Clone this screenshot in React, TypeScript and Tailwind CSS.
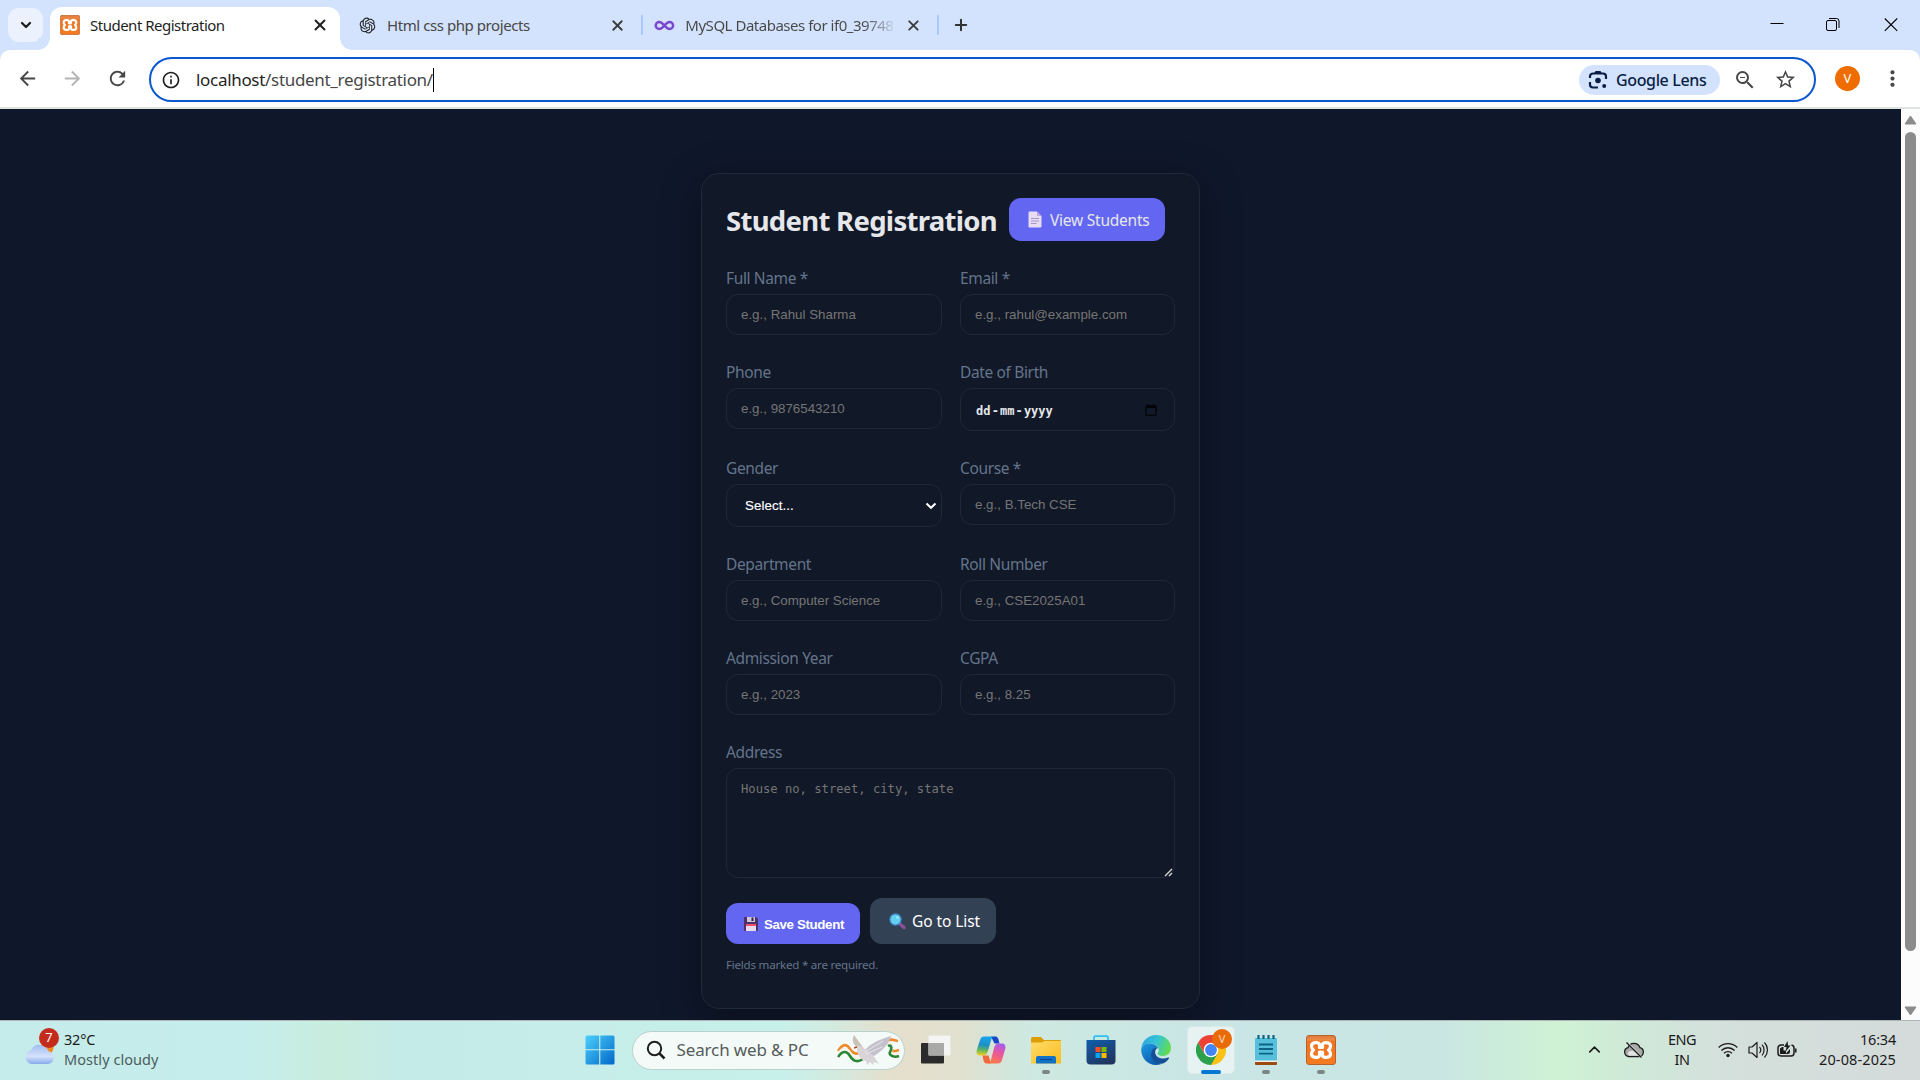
import React from "react";
import {
  MdArrowBack,
  MdArrowForward,
  MdRefresh,
  MdOutlineInfo,
  MdStarBorder,
  MdMoreVert,
  MdZoomOut,
} from "react-icons/md";
import { RiOpenaiFill } from "react-icons/ri";
import { Infinity as InfinityIcon, ChevronDown, ChevronUp, Plus, X } from "lucide-react";

function XamppIcon({ className }: { className: string }) {
  return (
    <svg viewBox="0 0 30 30" className={className}>
      <defs>
        <linearGradient id="xampp" x1="0" y1="0" x2="0" y2="1">
          <stop offset="0" stopColor="#d9793a" />
          <stop offset=".15" stopColor="#f08a45" />
          <stop offset=".2" stopColor="#ee7424" />
          <stop offset="1" stopColor="#f47b20" />
        </linearGradient>
      </defs>
      <rect x=".5" y=".5" width="29" height="29" rx="2.5" fill="url(#xampp)" stroke="#b9622c" />
      <path
        d="M13.500 12.500V9.500C13.500 6.800 5.500 6.800 5.500 11c0 2 .8 3.200 2 4-1.200.8-2 2-2 4 0 4.200 8 4.200 8 1.500v-3.500h3v3.500c0 2.700 8 2.700 8-1.500 0-2-.8-3.200-2-4 1.200-.8 2-2 2-4 0-4.200-8-4.200-8-1.500v3z"
        fill="none"
        stroke="#fff"
        strokeWidth="3.200"
        strokeLinejoin="round"
      />
    </svg>
  );
}

function LensIcon() {
  return (
    <svg viewBox="0 0 20 20" className="h-5 w-5" fill="none" stroke="#0a1d45" strokeWidth="2.200">
      <path d="M2 8V6.500A3 3 0 0 1 5 3.500h10a3 3 0 0 1 3 3V9M2 12v2.500a3 3 0 0 0 3 3h5" />
      <path d="M7 3.200 8 1.600h4l1 1.600" fill="#0a1d45" strokeWidth="1.400" />
      <circle cx="10" cy="10.500" r="2.800" fill="#0a1d45" stroke="none" />
      <circle cx="16.200" cy="16" r="2" fill="#0a1d45" stroke="none" />
    </svg>
  );
}

function TabStrip() {
  return (
    <div className="flex h-[50px] bg-[#d3e3fd] pl-2">
      <div className="mt-2 flex h-[34px] w-[35px] items-center justify-center rounded-[11px] bg-[#ebf1fd]">
        <ChevronDown className="h-4 w-4 text-[#1f1f1f]" strokeWidth={3.4} />
      </div>
      <div className="relative ml-[7px] mt-[7px] flex h-[43px] w-[290px] items-center rounded-t-[12px] bg-white pb-[7px] pl-[10px]">
        <div className="absolute -left-3 bottom-0 h-3 w-3 bg-[radial-gradient(circle_at_0_0,#d3e3fd_11.500px,#fff_12px)]" />
        <div className="absolute -right-3 bottom-0 h-3 w-3 bg-[radial-gradient(circle_at_100%_0,#d3e3fd_11.500px,#fff_12px)]" />
        <XamppIcon className="h-5 w-5" />
        <span className="ml-[10px] flex-1 text-[15px] tracking-[-0.500px] text-[#1f1f1f]">Student Registration</span>
        <X className="mr-[11px] h-[18px] w-[18px] text-[#1f1f1f]" strokeWidth={2.600} />
      </div>
      <div className="mt-[7px] flex h-9 w-[301px] items-center pl-[18px]">
        <RiOpenaiFill className="h-[19px] w-[19px] text-[#1f1f1f]" />
        <span className="ml-[10px] flex-1 text-[15px] tracking-[-0.430px] text-[#474747]">Html css php projects</span>
        <X className="mr-[15px] h-[17px] w-[17px] text-[#3a3a3a]" strokeWidth={2.600} />
      </div>
      <div className="mt-[7px] flex h-9 w-[298px] items-center">
        <div className="h-5 w-[2.500px] rounded-full bg-[#a8c7fa]" />
        <InfinityIcon className="ml-[11px] h-[21px] w-[21px] text-[#7a48cf]" strokeWidth={2.900} />
        <span className="ml-[10px] w-[216px] overflow-hidden whitespace-nowrap bg-[linear-gradient(90deg,#474747_83%,#47474700_99%)] bg-clip-text text-[15px] tracking-[-0.480px] text-transparent">
          MySQL Databases for if0_39748
        </span>
        <X className="ml-[5px] h-[17px] w-[17px] text-[#3a3a3a]" strokeWidth={2.600} />
        <div className="ml-[15px] h-5 w-[2.500px] rounded-full bg-[#a8c7fa]" />
      </div>
      <Plus className="ml-[13px] mt-[16px] h-[18px] w-[18px] text-[#333]" strokeWidth={2.700} />
      <div className="flex flex-1 items-start justify-end pr-[22px] pt-[18px] text-black">
        <svg viewBox="0 0 14 14" className="h-[14px] w-[14px]">
          <path d="M.5 5.500h13" stroke="currentColor" />
        </svg>
        <svg viewBox="0 0 14 14" className="ml-[42px] h-[14px] w-[14px]" fill="none" stroke="currentColor">
          <rect x=".5" y="2.500" width="10" height="10" rx="1.500" />
          <path d="M3 .500h7.500a2.500 2.500 0 0 1 2.500 2.500V10" />
        </svg>
        <svg viewBox="0 0 14 14" className="ml-11 h-[14px] w-[14px]">
          <path d="m.8.5 12.400 12.400M13.200.5.8 12.900" stroke="currentColor" strokeWidth="1.100" />
        </svg>
      </div>
    </div>
  );
}

function Toolbar() {
  return (
    <div className="h-[59px] bg-[#d3e3fd]">
      <div className="flex h-full items-center rounded-t-[10px] border-b-2 border-[#dfe4e0] bg-white pl-[16px]">
        <MdArrowBack className="h-[23px] w-[23px] text-[#474747]" />
        <MdArrowForward className="ml-[22px] h-[23px] w-[23px] text-[#b4b4b4]" />
        <MdRefresh className="ml-[22px] h-[23px] w-[23px] text-[#474747]" />
        <div className="ml-[20px] mt-[2px] flex h-[45px] w-[1667px] items-center rounded-full border-[2.500px] border-[#0b57d0] pl-[10px]">
          <MdOutlineInfo className="h-[20px] w-[20px] text-[#1f1f1f]" />
          <div className="ml-[15px] flex items-center text-[17px] tracking-[-0.310px]">
            <span className="text-[#1f1f1f]">localhost</span>
            <span className="text-[#474747]">/student_registration/</span>
            <span className="h-6 w-px bg-black" />
          </div>
          <div className="ml-auto flex h-[30px] w-[141px] items-center rounded-full bg-[#d3e3fd] pl-[9px]">
            <LensIcon />
            <span className="ml-[8px] whitespace-nowrap text-[16px] font-medium tracking-[-0.360px] text-[#0a1d45]">Google Lens</span>
          </div>
          <MdZoomOut className="ml-[13px] h-6 w-6 text-[#474747]" />
          <MdStarBorder className="ml-[17px] h-[23px] w-[23px] text-[#474747]" />
          <div className="w-[17px]" />
        </div>
        <div className="ml-[19px] flex h-[25px] w-[25px] items-center justify-center rounded-full bg-[#ef6c00] text-[13px] text-white">V</div>
        <MdMoreVert className="ml-[20px] h-[25px] w-[25px] text-[#474747]" />
      </div>
    </div>
  );
}

function Label({ children }: { children: React.ReactNode }) {
  return <div className="h-5 whitespace-nowrap text-[15.500px] leading-5 tracking-[-0.360px] text-[#64748b]">{children}</div>;
}

const box = "mt-[6px] flex items-center rounded-xl border border-[#1f2937] font-['Liberation_Sans',sans-serif] text-[13.330px]";

function Field({ label, placeholder }: { label: string; placeholder: string }) {
  return (
    <div>
      <Label>{label}</Label>
      <div className={`${box} h-[41px] pl-[14px] text-[#757575]`}>{placeholder}</div>
    </div>
  );
}

function PageIcon() {
  return (
    <svg viewBox="0 0 14 17" className="h-[17px] w-[14px]">
      <path d="M1.500.5h7.500L13.500 5v10.500a1 1 0 0 1-1 1h-11a1 1 0 0 1-1-1v-14a1 1 0 0 1 1-1z" fill="#e6dcf4" />
      <path d="M9 .5 13.500 5H9z" fill="#b9a6dc" />
      <path d="M3 7.500h8M3 10h8M3 12.500h5.500" stroke="#a796c4" />
    </svg>
  );
}

function FloppyIcon() {
  return (
    <svg viewBox="0 0 14 14" className="h-[14px] w-[14px]">
      <path d="M1 0h11l2 2v11a1 1 0 0 1-1 1H1a1 1 0 0 1-1-1V1a1 1 0 0 1 1-1z" fill="#4d3168" />
      <path d="M3 0h8v5H3z" fill="#cfc6dc" />
      <path d="M7.500.5h2v3.500h-2z" fill="#35214d" />
      <path d="M2 7h10v7H2z" fill="#e7dcef" />
      <path d="M2 7h10v2H2z" fill="#f0506e" />
    </svg>
  );
}

function MagnifierIcon() {
  return (
    <svg viewBox="0 0 17 17" className="h-[17px] w-[17px]">
      <path d="m10.500 10.500 4.500 4" stroke="#8b4f93" strokeWidth="3.400" strokeLinecap="round" />
      <circle cx="6.500" cy="6.500" r="5.600" fill="#62d0ee" stroke="#3f86c9" strokeWidth="1.200" />
      <circle cx="8.500" cy="4.500" r="1.200" fill="#a8e9f8" />
    </svg>
  );
}

function RegistrationCard() {
  return (
    <div className="mt-16 h-[836px] w-[499px] rounded-[18px] border border-[#1f2937] bg-[#111827] px-6 pt-6 shadow-[0_10px_40px_rgba(0,0,0,0.350)]">
      <div className="flex h-[43px] items-center">
        <h1 className="w-[283px] whitespace-nowrap pt-[3px] text-[27.500px] font-bold leading-[42px] tracking-[-0.700px] text-[#e5e7eb]">Student Registration</h1>
        <div className="flex h-[43px] w-[156px] items-center rounded-xl bg-[#6366f1] pl-[19px] text-[#e5e7eb]">
          <PageIcon />
          <span className="ml-[8px] whitespace-nowrap pt-[2px] text-[15.500px] tracking-[-0.230px]">View Students</span>
        </div>
      </div>
      <div className="mt-[27px] grid grid-cols-[216px_215px] gap-x-[18px] gap-y-[27px]">
        <Field label="Full Name *" placeholder="e.g., Rahul Sharma" />
        <Field label="Email *" placeholder="e.g., rahul@example.com" />
        <Field label="Phone" placeholder="e.g., 9876543210" />
        <div>
          <Label>Date of Birth</Label>
          <div className={`${box} h-[43px] pl-[15px] pr-[17px]`}>
            <div className="flex flex-1 pt-[2px] font-['DejaVu_Sans_Mono',monospace] text-[12px] font-bold text-[#e5e7eb]">
              <span>dd</span>
              <span className="w-[9.600px] text-center">-</span>
              <span className="tracking-[-0.100px]">mm</span>
              <span className="w-[9.600px] text-center">-</span>
              <span>yyyy</span>
            </div>
            <svg viewBox="0 0 12 12" className="h-3 w-3" fill="none" stroke="#030509" strokeWidth="1.300">
              <rect x="1" y="1.700" width="10" height="9.600" rx="1" />
              <path d="M1 3h10M3.200 0v2M8.800 0v2" strokeWidth="1.800" />
            </svg>
          </div>
        </div>
        <div>
          <Label>Gender</Label>
          <div className={`${box} h-[43px] pl-[18px] pr-[4px] text-white`}>
            <span className="flex-1 tracking-[0.080px] [-webkit-text-stroke:0.150px_white]">Select...</span>
            <svg viewBox="0 0 12 12" className="h-3 w-3" fill="none">
              <path d="m1.500 3.500 4.500 4.300 4.500-4.300" stroke="#fff" strokeWidth="2" />
            </svg>
          </div>
        </div>
        <Field label="Course *" placeholder="e.g., B.Tech CSE" />
        <Field label="Department" placeholder="e.g., Computer Science" />
        <Field label="Roll Number" placeholder="e.g., CSE2025A01" />
        <Field label="Admission Year" placeholder="e.g., 2023" />
        <Field label="CGPA" placeholder="e.g., 8.25" />
      </div>
      <div className="mt-[27px]">
        <Label>Address</Label>
        <div className="relative mt-[6px] h-[110px] rounded-xl border border-[#1f2937] pl-[14px] pt-[12px] font-['DejaVu_Sans_Mono',monospace] text-[12.180px] leading-4 text-[#757575]">
          House no, street, city, state
          <svg viewBox="0 0 9 9" className="absolute bottom-0 right-px h-[9px] w-[9px]">
            <path d="M1 8 8 1M5 8l3-3" stroke="#d6d6d6" strokeWidth="1.400" />
          </svg>
        </div>
      </div>
      <div className="mt-5 flex h-[46px] items-end gap-[10px] text-white">
        <div className="flex h-[41px] w-[134px] items-center rounded-xl bg-[#6366f1] pl-[18px]">
          <FloppyIcon />
          <span className="ml-[6px] whitespace-nowrap pt-[2px] font-['Liberation_Sans',sans-serif] text-[13.330px] font-bold tracking-[-0.370px]">Save Student</span>
        </div>
        <div className="flex h-[46px] w-[126px] items-center rounded-xl bg-[#334155] pl-[19px]">
          <MagnifierIcon />
          <span className="ml-[6px] whitespace-nowrap pt-[2px] text-[15.500px] tracking-[-0.080px]">Go to List</span>
        </div>
      </div>
      <div className="mt-[12px] whitespace-nowrap text-[11.600px] leading-[18px] tracking-[-0.240px] text-[#64748b]">Fields marked * are required.</div>
    </div>
  );
}

function Dove() {
  return (
    <svg viewBox="0 0 64 32" className="h-8 w-16">
      <g fill="none" strokeWidth="2.600">
        <path d="M1 17c5-8 9-7 12-2s7 6 13 3" stroke="#ef8b2c" />
        <path d="M1 20c5-7 9-6 12-1s7 6 13 3" stroke="#f6f3ea" />
        <path d="M1 23c5-7 9-6 12-1s7 7 13 3" stroke="#2c8638" />
        <path d="M49 7c6-3 7-1 12 0M54 13c1 6 4 4 8 3" stroke="#ef8b2c" />
        <path d="M50 10c6-3 6 3 4 7s4 4 8 2" stroke="#f6f3ea" />
        <path d="M51 12c4-2 4 3 2 6s4 6 9 4" stroke="#2c8638" />
      </g>
      <path d="M17 1c-3 6 0 11 6 14l5 1z" fill="#c9c0b6" />
      <path d="M26 20c3-9 15-14 28-18-2 8-8 14-17 20z" fill="#c4c0cc" />
      <path d="M18 13c3-3 8 0 11 3s7 4 9 8l4 6-5-2-1 3-3-3-3 3-1-4c-6-1-9-7-9-13z" fill="#d9d4d8" />
      <path d="m28 18 18-11M29 20l16-7" stroke="#e9e7ec" />
      <path d="m20 13-3 1" stroke="#b0482e" strokeWidth="1.500" />
    </svg>
  );
}

function StartIcon() {
  return (
    <svg viewBox="0 0 30 30" className="h-[30px] w-[30px]">
      <defs>
        <linearGradient id="win" x1="0" y1="0" x2="1" y2="1">
          <stop offset="0" stopColor="#4dd0fb" />
          <stop offset="1" stopColor="#0067c9" />
        </linearGradient>
      </defs>
      <path d="M.5 2A1.500 1.500 0 0 1 2 .5h12.200v13.700H.5zM15.300.5H28A1.500 1.500 0 0 1 29.500 2v12.200H15.300zM.5 15.300h13.700v14.200H2A1.500 1.500 0 0 1 .5 28zM15.300 15.300h14.200V28a1.500 1.500 0 0 1-1.500 1.500H15.300z" fill="url(#win)" />
    </svg>
  );
}

function TaskViewIcon() {
  return (
    <svg viewBox="0 0 30 30" className="h-[30px] w-[30px]">
      <rect y="8" width="23" height="20.500" rx="1" fill="#2b2b2b" />
      <rect x="7.500" y=".5" width="22" height="20" rx="1" fill="#f4f4f4" />
      <path d="M7.500 8H23v12.500H7.500z" fill="#a9a9a7" />
    </svg>
  );
}

function CopilotIcon() {
  return (
    <svg viewBox="0 0 30 30" className="h-[30px] w-[30px]">
      <defs>
        <linearGradient id="cpa" x1=".4" y1="0" x2=".3" y2="1">
          <stop offset="0" stopColor="#16a6ee" />
          <stop offset=".45" stopColor="#1c8fc4" />
          <stop offset=".7" stopColor="#5cb464" />
          <stop offset="1" stopColor="#f4cf1e" />
        </linearGradient>
        <linearGradient id="cpb" x1=".7" y1="0" x2=".4" y2="1">
          <stop offset="0" stopColor="#a75cf0" />
          <stop offset=".45" stopColor="#e956a0" />
          <stop offset="1" stopColor="#fb7a4b" />
        </linearGradient>
      </defs>
      <path d="M15 1.500h4.500c2 0 2.500 1.500 3.200 4l.8 3h-5z" fill="#1746c8" />
      <path d="M8 1.500h10.500c-2 0-3 2-3.700 4.500l-3 10.500c-.8 2.800-2 4-4.500 4H4C1 20.500 0 18 .8 15L4 5c.8-2.400 2-3.500 4-3.500z" fill="url(#cpa)" />
      <path d="M15 28.500h-4.500c-2 0-2.500-1.500-3.200-4l-.8-4h6z" fill="#f1683f" />
      <path d="M22 28.500H11.500c2 0 3-2 3.700-4.500l3-11.500c.8-2.800 2-4 4.500-4H26c3 0 4 2.500 3.200 5.500L26 25c-.8 2.400-2 3.500-4 3.500z" fill="url(#cpb)" />
    </svg>
  );
}

function FolderIcon() {
  return (
    <svg viewBox="0 0 30 30" className="h-[30px] w-[30px]">
      <defs>
        <linearGradient id="fold" x1="0" y1="0" x2="1" y2="1">
          <stop offset="0" stopColor="#ffdc6a" />
          <stop offset="1" stopColor="#f9bc1e" />
        </linearGradient>
      </defs>
      <path d="M0 3.500A1.500 1.500 0 0 1 1.500 2H10l3 3h16a1 1 0 0 1 1 1v6H0z" fill="#dd9d08" />
      <path d="M0 7.500h11L13.500 6H30v22.500H0z" fill="url(#fold)" />
      <path d="M5 28.500V23a2 2 0 0 1 2-2h16a2 2 0 0 1 2 2v5.500z" fill="#1173c7" />
      <path d="M9 24.500h12" stroke="#0a4a8c" strokeWidth="1.200" />
    </svg>
  );
}

function StoreIcon() {
  return (
    <svg viewBox="0 0 30 30" className="h-[30px] w-[30px]">
      <defs>
        <linearGradient id="store" x1="0" y1="0" x2=".6" y2="1">
          <stop offset="0" stopColor="#0f5fae" />
          <stop offset="1" stopColor="#203660" />
        </linearGradient>
      </defs>
      <path d="M8 6V2.500A1.300 1.300 0 0 1 9.300 1.200h11.400A1.300 1.300 0 0 1 22 2.500V6" fill="none" stroke="#2fc0f3" strokeWidth="1.800" />
      <path d="M.5 5h29v20.500a4 4 0 0 1-4 4h-21a4 4 0 0 1-4-4z" fill="url(#store)" />
      <path d="M9.500 12h5v5h-5z" fill="#f25022" />
      <path d="M15.500 12h5v5h-5z" fill="#7fba00" />
      <path d="M9.500 18h5v5h-5z" fill="#0aa4ef" />
      <path d="M15.500 18h5v5h-5z" fill="#ffb900" />
    </svg>
  );
}

function EdgeIcon() {
  return (
    <svg viewBox="0 0 30 30" className="h-[30px] w-[30px]">
      <defs>
        <linearGradient id="eda" x1="0" y1=".2" x2="1" y2=".5">
          <stop offset="0" stopColor="#2aa5e0" />
          <stop offset=".5" stopColor="#35c4d6" />
          <stop offset="1" stopColor="#63dc4c" />
        </linearGradient>
        <linearGradient id="edb" x1="0" y1="0" x2=".6" y2="1">
          <stop offset="0" stopColor="#1b9be0" />
          <stop offset="1" stopColor="#0d5cae" />
        </linearGradient>
      </defs>
      <path d="M.3 13.500C1 5.500 7.500 0 15.200 0 24 0 30 6 30 13c0 5-3.800 8-8.300 8-3.500 0-5.200-1.300-5.200-2.400 0-.8 1.300-1.400 1.300-3.800C17.800 11 14 8.500 9.500 8.500 5 8.500 1.500 10.500.3 13.500z" fill="url(#eda)" />
      <path d="M.2 14C1.500 10.300 5 8.500 9 8.500c4.500 0 8 2.500 8.500 5.500-1-1-2-1.400-3-1-4 2-5.500 12 5.500 16.200-1.500.6-3.200.8-5 .8C6.500 30 0 23 .2 14z" fill="url(#edb)" />
      <path d="M14 12.800C9 15 8 24 15.500 28c5 2.400 10-.5 12.500-4.800.3-.6-.2-1-.8-.7-5 2.300-12 .8-13-4.500-.2-2 .3-3.500 2-4.700-.8-.5-1.500-.6-2.200-.5z" fill="#144f98" />
    </svg>
  );
}

function ChromeIcon() {
  return (
    <svg viewBox="0 0 30 30" className="h-[30px] w-[30px]">
      <path d="M15 15 2 7.500A15 15 0 0 1 28 7.500z" fill="#ea4335" />
      <path d="M15 15 28 7.500A15 15 0 0 1 15 30z" fill="#fbc116" />
      <path d="M15 0A15 15 0 0 1 28 7.500H15z" fill="#ea4335" />
      <path d="M2 7.500A15 15 0 0 0 15 30l6.500-11.200L15 15l-6.500 3.800z" fill="#2da04e" />
      <path d="M8.500 18.700 2 7.500 15 8z" fill="#ea4335" />
      <circle cx="15" cy="15" r="7.300" fill="#fff" />
      <circle cx="15" cy="15" r="5.900" fill="#4285f4" />
    </svg>
  );
}

function NotepadIcon() {
  return (
    <svg viewBox="0 0 30 30" className="h-[30px] w-[30px]">
      <path d="M4 25h22v4a1 1 0 0 1-1 1H5a1 1 0 0 1-1-1z" fill="#9b4a12" />
      <path d="M4 24h22v3H4z" fill="#f3f1ee" />
      <path d="M4 4a1 1 0 0 1 1-1h20a1 1 0 0 1 1 1v21.500H4z" fill="#56c0dc" />
      <path d="M8 9.500h14M8 14h14M8 18.700h14" stroke="#0d6483" strokeWidth="1.800" />
      <path d="M7.500 0v4M12.500 0v4M17.500 0v4M22.500 0v4" stroke="#12647f" strokeWidth="2.200" />
    </svg>
  );
}

function TaskIcon({ children, running }: { children: React.ReactNode; running?: boolean }) {
  return (
    <div className="relative flex h-[59px] w-[55px] items-center justify-center pb-px">
      {children}
      {running && <div className="absolute bottom-[6px] h-1 w-2 rounded-full bg-[#7b8785]" />}
    </div>
  );
}

function Taskbar() {
  return (
    <div className="flex h-[60px] items-center border-t border-[#adb5b5] bg-[linear-gradient(90deg,#c5ecea_0px,#c5edeb_250px,#c9eddd_340px,#c5ebe9_400px,#c7f0ea_780px,#d2ebe0_830px,#e5dfcd_890px,#e1e0cf_960px,#cde9e1_1030px,#c9e5e5_1240px,#c9e6e2_1440px,#cff2d4_1560px,#cfe8d8_1640px,#d4e0dc_1720px,#d4dbda_1920px)]">
      <div className="flex w-[572.500px] items-center pb-[4px] pl-[24px]">
        <div className="relative h-[42px] w-8">
          <svg viewBox="0 0 32 42" className="h-[42px] w-8">
            <defs>
              <linearGradient id="cloud" x1="0" y1="0" x2="0" y2="1">
                <stop offset="0" stopColor="#9fbdf3" />
                <stop offset=".6" stopColor="#d5e2fb" />
                <stop offset="1" stopColor="#86a9ec" />
              </linearGradient>
            </defs>
            <circle cx="23" cy="20" r="6.500" fill="#f58a1c" />
            <path d="M8 36a7 7 0 0 1-1-13.800 9.500 9.500 0 0 1 17.500 1A6.500 6.500 0 0 1 24 36z" fill="url(#cloud)" />
          </svg>
          <div className="absolute left-[15px] top-0 flex h-5 w-5 items-center justify-center rounded-full bg-[#c42b1c] text-[13px] text-white">7</div>
        </div>
        <div className="ml-[8px] text-[14.500px] leading-5">
          <div className="tracking-[-0.200px] text-[#1b1b1b]">32°C</div>
          <div className="tracking-[0.060px] text-[#4c5c5c]">Mostly cloudy</div>
        </div>
      </div>
      <TaskIcon>
        <StartIcon />
      </TaskIcon>
      <div className="mb-px ml-[4px] flex h-[39px] w-[273px] items-center rounded-full border border-[#b9d2cd] bg-[#f4faf7] pl-[13px]">
        <svg viewBox="0 0 20 20" className="h-5 w-5" fill="none" stroke="#1f1f1f" strokeWidth="2">
          <circle cx="8.500" cy="8.500" r="6.700" />
          <path d="m13.500 13.500 5 5" strokeWidth="2.500" />
        </svg>
        <span className="ml-[11px] w-[160px] whitespace-nowrap text-[17px] tracking-[-0.130px] text-[#555c5b]">Search web &amp; PC</span>
        <Dove />
      </div>
      <div className="ml-[4px] flex">
        <TaskIcon>
          <TaskViewIcon />
        </TaskIcon>
        <TaskIcon>
          <CopilotIcon />
        </TaskIcon>
        <TaskIcon running>
          <FolderIcon />
        </TaskIcon>
        <TaskIcon>
          <StoreIcon />
        </TaskIcon>
        <TaskIcon>
          <EdgeIcon />
        </TaskIcon>
        <div className="flex h-[59px] w-[55px] items-center justify-center pb-px">
          <div className="relative flex h-12 w-12 items-center justify-center rounded-[5px] border border-[#dbe9e8] bg-[#e6f3f2]">
            <ChromeIcon />
            <div className="absolute right-[2px] top-[2px] flex h-5 w-5 items-center justify-center rounded-full bg-[#e96a06] text-[11px] text-[#fbd9bd]">V</div>
            <div className="absolute -bottom-px h-1 w-5 rounded-full bg-[#0078d4]" />
          </div>
        </div>
        <TaskIcon running>
          <NotepadIcon />
        </TaskIcon>
        <TaskIcon running>
          <XamppIcon className="h-[30px] w-[30px]" />
        </TaskIcon>
      </div>
      <div className="flex flex-1 items-center justify-end pb-[2px] pr-6 text-[#1b1b1b]">
        <ChevronUp className="h-[19px] w-[19px]" strokeWidth={2} />
        <svg viewBox="0 0 22 18" className="ml-[19px] h-[18px] w-[22px]" fill="none" stroke="#1b1b1b" strokeWidth="1.300">
          <path d="M5.500 15.500a4.500 4.500 0 0 1-.5-8.800 6.300 6.300 0 0 1 12 0 4.500 4.500 0 0 1-.5 8.800z" fill="#a9a9a9" />
          <path d="M6 14.800a3 3 0 0 1 0-4.500l4-.5 6 5z" fill="#e4e4e4" stroke="none" />
          <path d="m3.500.8 15.500 16" stroke="#d4dfda" strokeWidth="2" />
          <path d="m3.500 1.500 15 15" />
        </svg>
        <div className="ml-[21px] w-[32px] pb-[2px] text-center text-[14.500px] leading-5 tracking-[-0.500px]">
          <div>ENG</div>
          <div>IN</div>
        </div>
        <svg viewBox="0 0 20 16" className="ml-[20px] h-4 w-5" fill="none" stroke="#1b1b1b" strokeWidth="1.300">
          <path d="M.7 5.500a13.200 13.200 0 0 1 18.600 0M3.400 8.500a9.300 9.300 0 0 1 13.200 0M6 11.300a5.600 5.600 0 0 1 8 0" />
          <circle cx="10" cy="13.500" r="1.700" fill="#1b1b1b" stroke="none" />
        </svg>
        <svg viewBox="0 0 21 18" className="ml-[10px] h-[18px] w-[21px]" fill="none" stroke="#1b1b1b" strokeWidth="1.200">
          <path d="M1 6h3l5-4.500v15L4 12H1z" strokeLinejoin="round" />
          <path d="M11.500 6a4.500 4.500 0 0 1 0 6M14 3.700a7.800 7.800 0 0 1 0 10.600M16.500 1.500a11 11 0 0 1 0 15" />
        </svg>
        <svg viewBox="0 0 20 17" className="ml-[8px] h-[17px] w-5" fill="none" stroke="#1b1b1b" strokeWidth="1.500">
          <path d="M7 4H4a3 3 0 0 0-3 3v5a3 3 0 0 0 3 3h10a3 3 0 0 0 3-3V7a3 3 0 0 0-2.500-3M18.800 7.500v4" />
          <path d="M3 7.500 5 6h1.500v3.500H9v3l4-4.500v3a2 2 0 0 1-2 2H3z" fill="#1b1b1b" stroke="none" />
          <path d="M10.500 0 7 6h2.500l-.8 4.500L13.500 4.500H11z" fill="#1b1b1b" stroke="none" />
        </svg>
        <div className="ml-[21px] w-[78px] pb-[2px] text-right text-[14.500px] leading-5">
          <div className="tracking-[-0.200px]">16:34</div>
          <div className="tracking-[0.130px]">20-08-2025</div>
        </div>
      </div>
    </div>
  );
}

export default function App() {
  return (
    <div className="flex h-[1080px] w-[1920px] flex-col overflow-hidden font-['Noto_Sans',sans-serif]">
      <TabStrip />
      <Toolbar />
      <div className="flex h-[911px] overflow-hidden">
        <div className="flex w-[1901px] justify-center overflow-hidden bg-[#0f172a]">
          <RegistrationCard />
        </div>
        <div className="flex w-[19px] flex-col items-center bg-[#fcfcfc]">
          <svg viewBox="0 0 13 10" className="mt-[6px] h-[10px] w-[13px]">
            <path d="M6.500 1 12 9H1z" fill="#8b8b8b" stroke="#8b8b8b" strokeLinejoin="round" />
          </svg>
          <div className="mt-[7px] h-[819px] w-[11px] rounded-full bg-[#8b8b8b]" />
          <svg viewBox="0 0 13 10" className="mt-[55px] h-[10px] w-[13px]">
            <path d="M6.500 9 12 1H1z" fill="#8b8b8b" stroke="#8b8b8b" strokeLinejoin="round" />
          </svg>
        </div>
      </div>
      <Taskbar />
    </div>
  );
}
